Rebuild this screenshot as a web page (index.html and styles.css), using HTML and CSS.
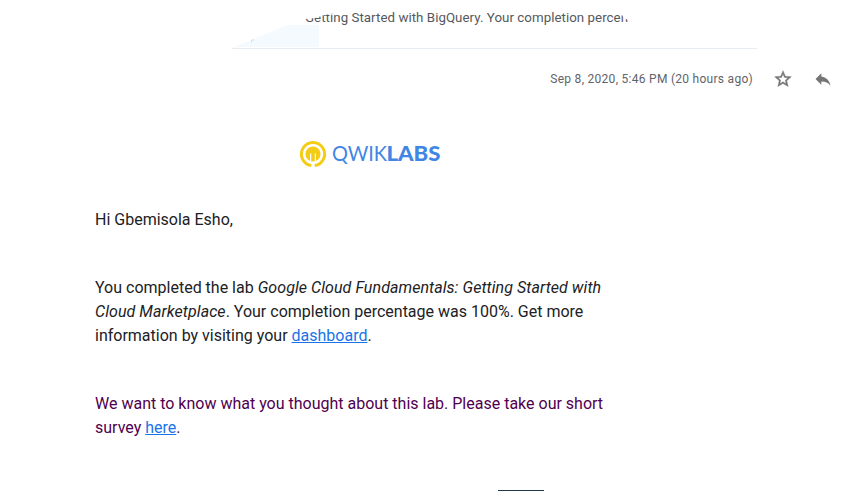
FILE: index.html
```html
<!DOCTYPE html>
<html lang="en">
<head>
<meta charset="utf-8">
<title>Lab completed</title>
<link rel="stylesheet" href="styles.css">
</head>
<body>
<header class="previous">
  <svg class="corner" width="87" height="23" viewBox="0 0 87 23"><path d="M0 23 55 0H87V22L10 22Z" fill="#f4fafd"/><path d="M19.500 17.500v-2.500h3" fill="none" stroke="#d8d9df" stroke-width=".8"/></svg>
  <p class="snippet">Getting Started with BigQuery. Your completion percen</p>
</header>
<div class="meta">
  <time class="date">Sep 8, 2020, 5:46 PM (20 hours ago)</time>
  <svg class="icon star" viewBox="0 0 24 24"><path d="M22 9.24l-7.19-.62L12 2 9.19 8.63 2 9.24l5.46 4.73L5.82 21 12 17.27 18.18 21l-1.63-7.03L22 9.24zM12 15.4l-3.76 2.27 1-4.28-3.32-2.88 4.38-.38L12 6.1l1.71 4.04 4.38.38-3.32 2.88 1 4.28L12 15.4z"/></svg>
  <svg class="icon" viewBox="0 0 24 24"><path d="M10 9V5l-7 7 7 7v-4.100c5 0 8.500 1.600 11 5.100-1-5-4-10-11-11z"/></svg>
</div>
<main class="message">
  <svg class="logo" width="144" height="30" viewBox="0 0 144 30">
    <path d="M12.300 26.500A11.600 11.600 0 1 1 15.700 26.500" fill="none" stroke="#f5cc14" stroke-width="3"/>
    <circle cx="14" cy="15" r="7.600" fill="#f5cc14"/>
    <path d="M11.600 23.500V14.500M16.400 14.500V23.500" fill="none" stroke="#fff" stroke-width="1.200"/>
    <text class="logo-light" x="33" y="21.500" textLength="55" lengthAdjust="spacingAndGlyphs">QWIK</text>
    <text class="logo-bold" x="87.500" y="21.500" textLength="54" lengthAdjust="spacingAndGlyphs">LABS</text>
  </svg>
  <p>Hi Gbemisola Esho,</p>
  <p>You completed the lab <em>Google Cloud Fundamentals: Getting Started with<br>Cloud Marketplace</em>. Your completion percentage was 100%. Get more<br>information by visiting your <a href="#">dashboard</a>.</p>
  <p class="survey">We want to know what you thought about this lab. Please take our short<br>survey <a href="#">here</a>.</p>
  <div class="button-edge"></div>
</main>
</body>
</html>
```
FILE: styles.css
```css
body {
  margin: 0;
  height: 491px;
  overflow: hidden;
  background: #fff;
  color: #202124;
  font-family: Roboto, "Liberation Sans", sans-serif;
}

p {
  margin: 0;
}

.previous {
  display: flex;
  box-sizing: border-box;
  width: 525px;
  height: 49px;
  margin-left: 232px;
  border-bottom: 1px solid #e8edf3;
}

.corner {
  flex: none;
  margin-top: 25px;
}

.snippet {
  margin: 8px 0 0 -14px;
  height: 20px;
  color: #55585c;
  font-size: 13.300px;
  letter-spacing: 0.045px;
  line-height: 20px;
  white-space: nowrap;
  clip-path: polygon(0 11px, 10px 10px, 20px 7px, 30px 5px, 39px 0, 314px 0, 318px 9px, 323px 12px, 323px 20px, 0 20px);
}

.meta {
  display: flex;
  align-items: center;
  height: 60px;
  padding-right: 25px;
  justify-content: flex-end;
}

.date {
  margin-right: 20px;
  color: #5f6368;
  font-size: 12px;
  letter-spacing: 0.28px;
}

.icon {
  width: 20px;
  height: 20px;
  fill: #757575;
}

.star {
  stroke: #757575;
  stroke-width: 0.5px;
}

.icon + .icon {
  margin-left: 20px;
}

.message {
  margin-left: 95px;
  width: 525px;
  font-size: 16px;
  line-height: 24px;
}

.message p {
  margin-bottom: 44px;
}

.message em {
  letter-spacing: 0.065px;
}

.logo {
  display: block;
  margin: 30px 0 39px 204px;
}

.logo-light,
.logo-bold {
  fill: #3f86e5;
  font-family: Lato, sans-serif;
  font-size: 21px;
}

.logo-light {
  font-weight: 400;
}

.logo-bold {
  font-weight: 900;
}

.message .survey {
  color: #500050;
  margin-bottom: 50px;
}

a {
  color: #1a73e8;
}

.button-edge {
  width: 46px;
  height: 2px;
  margin-left: 403px;
  background: #20394d;
}
```
